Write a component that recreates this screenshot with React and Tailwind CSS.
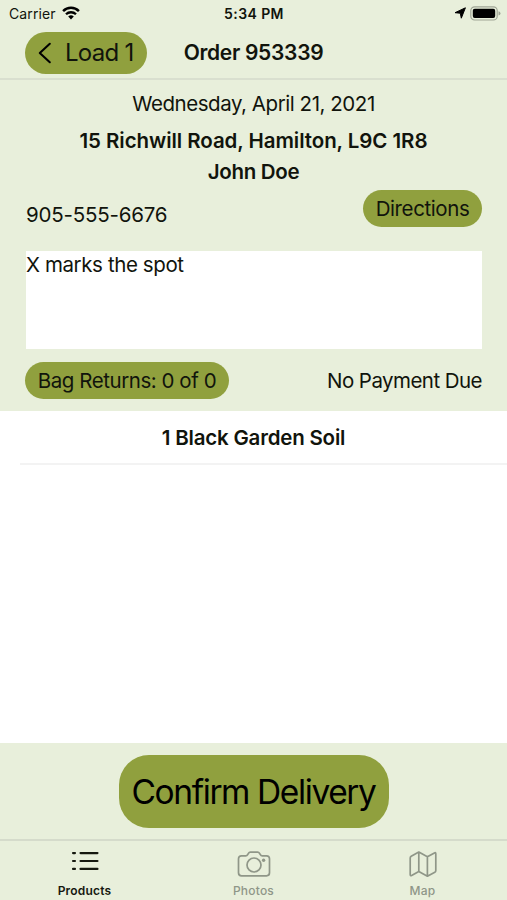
import React from "react";

function StatusBar() {
  return (
    <div className="flex h-[27px] items-center justify-between pl-[9px] pr-[6px]">
      <div className="flex flex-1 items-center gap-[6px]">
        <span className="text-[14px] tracking-[0.1px]">Carrier</span>
        <svg width="18" height="14" viewBox="0 0 18 14" fill="none" className="mb-[2px]">
          <path d="M1.1 5.1a11.2 11.2 0 0 1 15.8 0" stroke="#000" strokeWidth="2.5" />
          <path d="M4 8.3a7.1 7.1 0 0 1 10 0" stroke="#000" strokeWidth="2.3" />
          <path d="M9 13.5 6.2 10.6a4 4 0 0 1 5.6 0Z" fill="#000" />
        </svg>
      </div>
      <span className="mr-[2px] text-[14px] font-semibold tracking-[0.4px]">5:34 PM</span>
      <div className="flex flex-1 items-center justify-end gap-[4px]">
        <svg width="12" height="12" viewBox="0 0 12 12" className="mb-px">
          <path d="M11.4.8 7.300 11.200 6.300 6.200 1 5.700Z" fill="#000" stroke="#000" strokeWidth="1" strokeLinejoin="round" />
        </svg>
        <svg width="31" height="15" viewBox="0 0 31 15">
          <rect x=".8" y=".8" width="26.4" height="13.2" rx="3.8" fill="none" stroke="#9fa596" strokeWidth="1.2" />
          <rect x="2.8" y="2.8" width="22.4" height="9.2" rx="1.9" fill="#000" />
          <path d="M28.5 5.2q2 .6 2 2.2t-2 2.2Z" fill="#9fa596" />
        </svg>
      </div>
    </div>
  );
}

function NavBar() {
  return (
    <header className="grid h-[53px] grid-cols-[1fr_auto_1fr] items-center border-b-2 border-[#d9dfcf] px-[25px]">
      <button className="flex h-[42px] w-[122px] items-center rounded-full bg-[#90a03e] pl-[13px]">
        <svg width="14" height="22" viewBox="0 0 14 22" fill="none" className="mr-[13px]">
          <path d="M11.8 1.8 1.8 11l10 9.2" stroke="#000" strokeWidth="2.1" strokeLinecap="round" strokeLinejoin="round" />
        </svg>
        <span className="whitespace-nowrap text-[24px] tracking-[-0.7px]">Load 1</span>
      </button>
      <h1 className="pt-px text-[21px] font-semibold tracking-[-0.3px]">Order 953339</h1>
    </header>
  );
}

function OrderDetails() {
  return (
    <section className="h-[331px] px-[25px] pt-[9px] text-[20.5px]">
      <p className="text-center leading-[30px] tracking-[-0.45px]">Wednesday, April 21, 2021</p>
      <p className="mt-[6px] text-center font-semibold leading-[31px] tracking-[-0.06px]">15 Richwill Road, Hamilton, L9C 1R8</p>
      <p className="text-center font-semibold leading-[31px] tracking-[-0.3px]">John Doe</p>
      <div className="mt-[3px] flex h-[38px] items-start justify-between">
        <span className="ml-px mt-[10px] leading-[30px] tracking-[-0.2px]">905-555-6676</span>
        <button className="h-[37px] w-[119px] rounded-full bg-[#90a03e] pt-[2px] tracking-[-0.4px]">Directions</button>
      </div>
      <div className="ml-px mt-[23px] h-[98px] w-[456px] bg-white leading-[27px] tracking-[-0.4px]">X marks the spot</div>
      <div className="mt-[13px] flex items-center justify-between">
        <button className="h-[37px] w-[204px] rounded-full bg-[#90a03e] pt-[2px] tracking-[-0.45px]">Bag Returns: 0 of 0</button>
        <span className="pt-[2px] tracking-[-0.55px]">No Payment Due</span>
      </div>
    </section>
  );
}

function ProductList() {
  return (
    <main className="h-[332px] bg-white">
      <div className="ml-[20px] flex h-[54px] items-center justify-center border-b-2 border-[#f3f3f3] pr-[20px] pt-[3px] text-[20.5px] font-semibold tracking-[-0.2px]">
        1 Black Garden Soil
      </div>
    </main>
  );
}

function TabBar() {
  return (
    <nav className="grid h-[61px] grid-cols-3 border-t-2 border-[#d5dbcb] text-[12px] font-medium tracking-[0.2px] text-[#8f9688]">
      <div className="flex flex-col items-center font-semibold text-[#15180f]">
        <svg width="28" height="22" viewBox="0 0 28 22" className="mt-[9px]" fill="none" stroke="currentColor" strokeWidth="2.1" strokeLinecap="round">
          <path d="M2 3.1h2M2 11h2M2 18.9h2M9.500 3.100h17M9.500 11h17M9.500 18.900h17" />
        </svg>
        <span className="mt-[11px] leading-[16px]">Products</span>
      </div>
      <div className="flex flex-col items-center">
        <svg width="34" height="26" viewBox="0 0 34 26" className="mt-[10px]" fill="none" stroke="currentColor" strokeWidth="1.700">
          <path d="M4.500 4.800h4.200c1 0 1.500-.3 2-1.200l.7-1.200c.5-.9 1-1.300 2-1.300h7.200c1 0 1.500.4 2 1.300l.7 1.200c.5.9 1 1.200 2 1.200h4.200q3 0 3 3v14q0 3-3 3h-25q-3 0-3-3v-14q0-3 3-3Z" />
          <circle cx="17" cy="14" r="7" />
          <circle cx="26.600" cy="9.200" r="1.700" fill="currentColor" stroke="none" />
        </svg>
        <span className="mt-[6px] leading-[16px]">Photos</span>
      </div>
      <div className="flex flex-col items-center">
        <svg width="28" height="26" viewBox="0 0 28 26" className="mt-[10px]" fill="none" stroke="currentColor" strokeWidth="1.700" strokeLinejoin="round">
          <path d="M1.200 7q0-1.100 1-1.700L9.800 1l8.600 4.800 7-3.900q1.400-.7 1.400 1V19.500q0 1.100-1 1.700l-7.400 4-8.600-4.700-7.200 4q-1.400.7-1.400-1ZM9.800 1v19.500M18.400 5.800v19.400" />
        </svg>
        <span className="mt-[6px] leading-[16px]">Map</span>
      </div>
    </nav>
  );
}

export default function App() {
  return (
    <div className="flex h-[900px] w-[507px] flex-col overflow-hidden bg-[#e8efdb] font-['Inter',sans-serif] text-[#11140c]">
      <StatusBar />
      <NavBar />
      <OrderDetails />
      <ProductList />
      <div className="flex h-[96px] items-center justify-center pt-px">
        <button className="h-[73px] w-[270px] whitespace-nowrap rounded-[30px] bg-[#90a03e] pt-[2px] text-[33.5px] tracking-[-1.4px] text-black">Confirm Delivery</button>
      </div>
      <TabBar />
    </div>
  );
}
